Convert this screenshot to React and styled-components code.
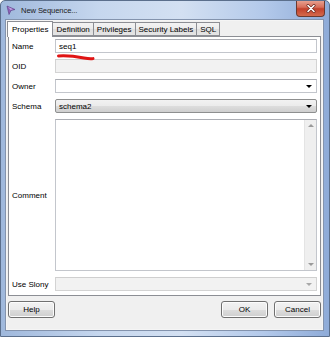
import React from 'react'
import styled, { createGlobalStyle } from 'styled-components'

const GlobalStyle = createGlobalStyle`
  html, body {
    margin: 0;
    padding: 0;
    background: #ffffff;
  }
  body {
    font-family: "Liberation Sans", Arial, sans-serif;
    font-size: 8px;
    color: #000;
  }
`

const Window = styled.div`
  position: relative;
  width: 330px;
  height: 337px;
  box-sizing: border-box;
  display: flex;
  flex-direction: column;
  border: 1px solid #5b6f8c;
  border-radius: 5px 5px 0 0;
  background: linear-gradient(90deg, #9fb8dc 0%, #c6d7ee 30%, #d3e0f2 55%, #b3c9ea 80%, #8eabd8 100%);
  padding: 0 5px 5px 4px;
  overflow: hidden;
`

const TitleBar = styled.div`
  height: 18px;
  display: flex;
  align-items: center;
  gap: 5px;
  padding-left: 1px;
`

const Title = styled.span`
  font-size: 7.6px;
  color: #1a1a1a;
  letter-spacing: -0.1px;
  flex: 1;
`

const CloseButton = styled.div`
  width: 29px;
  height: 17px;
  margin-top: -1px;
  margin-right: -1px;
  align-self: flex-start;
  display: flex;
  align-items: center;
  justify-content: center;
  border: 1px solid #6b3a30;
  border-top: none;
  border-radius: 0 0 4px 4px;
  background: linear-gradient(180deg, #e9a797 0%, #d86e5a 45%, #c2412c 55%, #d46a4c 100%);
  box-sizing: border-box;
`

const Content = styled.div`
  flex: 1;
  display: flex;
  flex-direction: column;
  border: 1px solid #8393ad;
  background: #f0f0f0;
  padding: 1px 1px 0 1px;
  box-shadow: inset 0 0 0 1px #ffffff55;
`

const TabRow = styled.div`
  display: flex;
  height: 15px;
  align-items: flex-end;
  position: relative;
  z-index: 1;
`

const Tab = styled.div`
  height: ${p => (p.$active ? '16px' : '14px')};
  box-sizing: border-box;
  display: flex;
  align-items: center;
  padding: 0 ${p => (p.$active ? '4px' : '3px')};
  margin-left: ${p => (p.$first ? '0' : '-1px')};
  margin-bottom: ${p => (p.$active ? '-1px' : '0')};
  border: 1px solid #8c8e94;
  border-bottom: ${p => (p.$active ? 'none' : '1px solid #8c8e94')};
  background: ${p => (p.$active ? '#ffffff' : 'linear-gradient(180deg, #f3f3f3 0%, #ebebeb 50%, #dedede 51%, #e5e5e5 100%)')};
  z-index: ${p => (p.$active ? 2 : 1)};
  white-space: nowrap;
`

const Panel = styled.div`
  flex: 1;
  margin: 0 1px;
  border: 1px solid #8c8e94;
  background: #ffffff;
  display: grid;
  grid-template-columns: 43px 1fr;
  grid-template-rows: 14px 14px 14px 14px 1fr 14px;
  row-gap: 6px;
  padding: 2px 3px 4px 3px;
`

const Label = styled.div`
  display: flex;
  align-items: center;
  white-space: nowrap;
`

const Field = styled.div`
  box-sizing: border-box;
  display: flex;
  align-items: center;
  padding: 0 3px;
  border: 1px solid ${p => (p.$disabled ? '#d3d3d3' : '#c3c6cc')};
  border-top-color: ${p => (p.$disabled ? '#cfcfcf' : '#abadb3')};
  background: ${p => (p.$disabled ? '#f2f2f2' : '#ffffff')};
`

const Combo = styled(Field)`
  justify-content: space-between;
  padding-right: 4px;
`

const DropCombo = styled.div`
  box-sizing: border-box;
  display: flex;
  align-items: center;
  justify-content: space-between;
  padding: 0 4px 0 3px;
  border: 1px solid #8e8f8f;
  border-radius: 2px;
  background: linear-gradient(180deg, #f2f2f2 0%, #ebebeb 50%, #dddddd 51%, #cfcfcf 100%);
`

const Arrow = styled.span`
  width: 0;
  height: 0;
  border-left: 3px solid transparent;
  border-right: 3px solid transparent;
  border-top: 3px solid ${p => (p.$disabled ? '#a8a8a8' : '#000')};
  border-bottom: none;
  ${p => p.$up && `
    border-top: none;
    border-bottom: 3px solid #9a9a9a;
  `}
  ${p => p.$down && `
    border-top-color: #9a9a9a;
  `}
`

const TextArea = styled.div`
  box-sizing: border-box;
  display: flex;
  justify-content: flex-end;
  border: 1px solid #c3c6cc;
  border-top-color: #abadb3;
  background: #ffffff;
`

const ScrollBar = styled.div`
  width: 11px;
  background: #efefef;
  border-left: 1px solid #e4e4e4;
  display: flex;
  flex-direction: column;
  justify-content: space-between;
  align-items: center;
  padding: 4px 0;
`

const ButtonBar = styled.div`
  display: flex;
  align-items: center;
  gap: 6px;
  padding: 5px 1px 12px 1px;
`

const Spacer = styled.div`
  flex: 1;
`

const Button = styled.button`
  width: 47px;
  height: 17px;
  box-sizing: border-box;
  padding: 0;
  font: inherit;
  color: #000;
  border: 1px solid #707070;
  border-radius: 3px;
  background: linear-gradient(180deg, #f2f2f2 0%, #ebebeb 50%, #dddddd 51%, #cfcfcf 100%);
  box-shadow: inset 0 0 0 1px #fcfcfc;
`

const Scribble = styled.svg`
  position: absolute;
  left: 55px;
  top: 52px;
`

function TitleIcon() {
  return (
    <svg width="10" height="10" viewBox="0 0 10 10">
      <path d="M1 1 L9 4.5 L5 5.5 L3 9.5 Z" fill="#8f63b8" stroke="#5c3a84" strokeWidth="0.6" />
      <path d="M2 2 L7 4.3 L4.6 4.9 Z" fill="#c7a6e4" />
    </svg>
  )
}

function CloseGlyph() {
  return (
    <svg width="10" height="9" viewBox="0 0 10 9">
      <path d="M2 1.5 L8 7.5 M8 1.5 L2 7.5" stroke="#6d2a20" strokeWidth="3" strokeLinecap="round" />
      <path d="M2 1.5 L8 7.5 M8 1.5 L2 7.5" stroke="#ffffff" strokeWidth="1.6" strokeLinecap="round" />
    </svg>
  )
}

const tabs = ['Properties', 'Definition', 'Privileges', 'Security Labels', 'SQL']

export default function App() {
  return (
    <>
      <GlobalStyle />
      <Window>
        <TitleBar>
          <TitleIcon />
          <Title>New Sequence...</Title>
          <CloseButton>
            <CloseGlyph />
          </CloseButton>
        </TitleBar>

        <Content>
          <TabRow>
            {tabs.map((t, i) => (
              <Tab key={t} $active={i === 0} $first={i === 0}>{t}</Tab>
            ))}
          </TabRow>

          <Panel>
            <Label>Name</Label>
            <Field>seq1</Field>

            <Label>OID</Label>
            <Field $disabled />

            <Label>Owner</Label>
            <Combo>
              <span />
              <Arrow />
            </Combo>

            <Label>Schema</Label>
            <DropCombo>
              <span>schema2</span>
              <Arrow />
            </DropCombo>

            <Label>Comment</Label>
            <TextArea>
              <ScrollBar>
                <Arrow $up />
                <Arrow $down />
              </ScrollBar>
            </TextArea>

            <Label>Use Slony</Label>
            <Combo $disabled>
              <span />
              <Arrow $disabled />
            </Combo>
          </Panel>

          <ButtonBar>
            <Button>Help</Button>
            <Spacer />
            <Button>OK</Button>
            <Button>Cancel</Button>
          </ButtonBar>
        </Content>

        <Scribble width="40" height="9" viewBox="0 0 40 9">
          <path d="M2.5 3 C 10 2.5, 20 3.5, 28 5 C 32 5.8, 35 6, 37 5.6" stroke="#e01414" strokeWidth="3" fill="none" strokeLinecap="round" />
        </Scribble>
      </Window>
    </>
  )
}
